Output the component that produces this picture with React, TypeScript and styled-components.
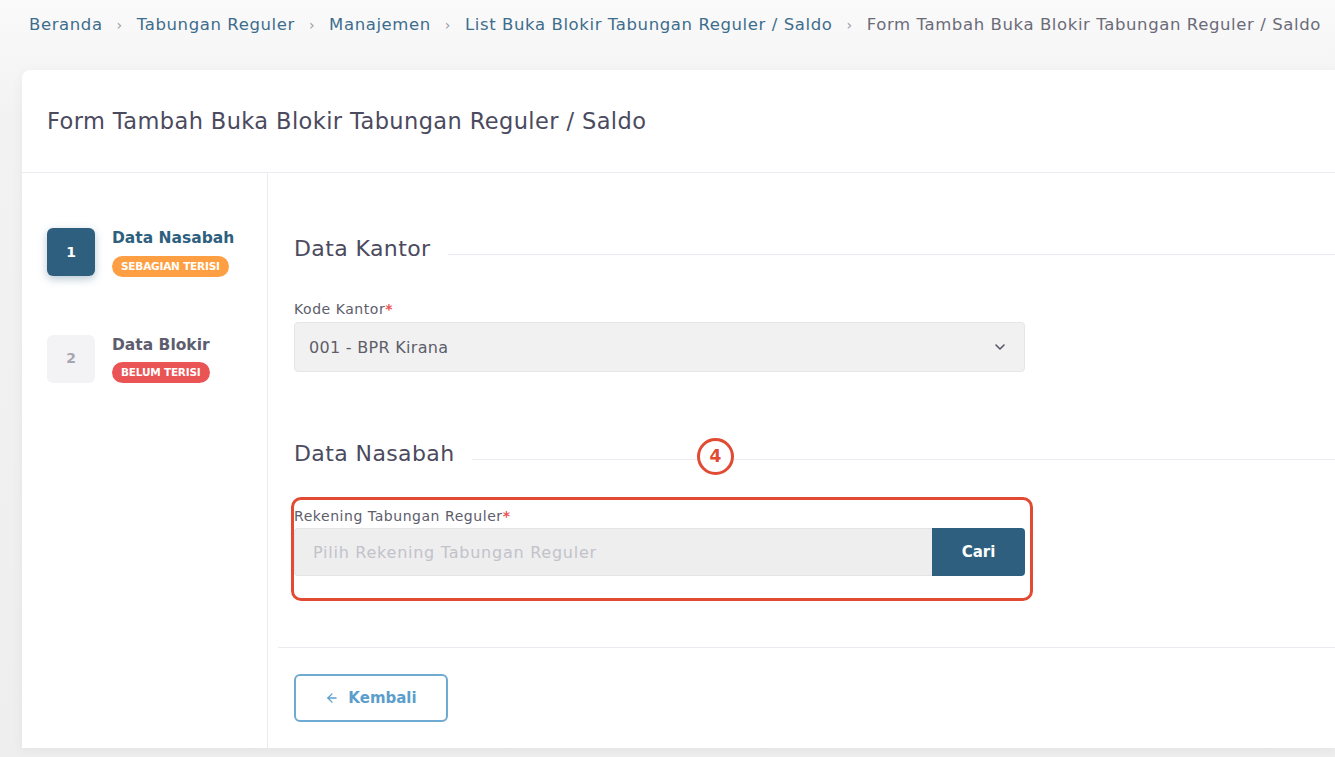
import React from 'react'
import styled, { createGlobalStyle } from 'styled-components'

const COLORS = {
  primary: '#2e5f7e',
  link: '#3d6d8d',
  text: '#4b4a5e',
  line: '#ebebf1',
  field: '#f1f1f1',
  orange: '#ff9f43',
  red: '#ea5455',
  annot: '#e24b33',
  outline: '#6eaad2',
}

const GlobalStyle = createGlobalStyle`
  html, body {
    margin: 0;
    padding: 0;
  }
  body {
    background: #f4f4f4;
    font-family: 'DejaVu Sans', 'Open Sans', sans-serif;
    line-height: 1.2;
    color: ${COLORS.text};
    overflow: hidden;
  }
`

const Page = styled.div`
  width: 1335px;
  height: 757px;
  overflow: hidden;
  background: linear-gradient(#fafafa, #f2f2f2 120px, #eeeeee);
`

const Breadcrumb = styled.nav`
  display: flex;
  align-items: center;
  gap: 14px;
  height: 50px;
  padding-left: 29px;
  font-size: 16.5px;
  letter-spacing: 0.6px;
  white-space: nowrap;
`

const Crumb = styled.span<{ $current?: boolean }>`
  color: ${(p) => (p.$current ? '#6b6b78' : COLORS.link)};
`

const Sep = styled.span`
  color: #9a9aa4;
  font-size: 14px;
`

const Card = styled.div`
  margin: 20px 0 0 22px;
  height: 678px;
  background: #fff;
  border-radius: 8px 0 0 0;
  box-shadow: 0 2px 12px rgba(0, 0, 0, 0.05);
  display: flex;
  flex-direction: column;
`

const CardHeader = styled.div`
  height: 102px;
  display: flex;
  align-items: center;
  padding-left: 25px;
  border-bottom: 1px solid ${COLORS.line};
  font-size: 22.5px;
  letter-spacing: 0.4px;
  color: ${COLORS.text};
`

const Body = styled.div`
  flex: 1;
  display: flex;
`

const Sidebar = styled.aside`
  box-sizing: border-box;
  width: 246px;
  flex-shrink: 0;
  border-right: 1px solid ${COLORS.line};
  padding: 55px 0 0 25px;
  display: flex;
  flex-direction: column;
  gap: 58px;
`

const Step = styled.div`
  display: flex;
  gap: 17px;
  align-items: flex-start;
`

const StepNum = styled.div<{ $active?: boolean }>`
  width: 48px;
  height: 48px;
  border-radius: 6px;
  display: flex;
  align-items: center;
  justify-content: center;
  font-size: 14px;
  font-weight: 600;
  background: ${(p) => (p.$active ? COLORS.primary : '#f3f3f5')};
  color: ${(p) => (p.$active ? '#fff' : '#a6a6b0')};
  box-shadow: ${(p) => (p.$active ? '0 3px 8px rgba(46, 95, 126, 0.35)' : 'none')};
`

const StepInfo = styled.div`
  display: flex;
  flex-direction: column;
  gap: 8px;
  padding-top: 1px;
`

const StepTitle = styled.div<{ $active?: boolean }>`
  font-size: 15.5px;
  font-weight: 700;
  color: ${(p) => (p.$active ? COLORS.primary : '#5d5d6e')};
`

const Badge = styled.span<{ $tone: 'orange' | 'red' }>`
  align-self: flex-start;
  background: ${(p) => (p.$tone === 'orange' ? COLORS.orange : COLORS.red)};
  color: #fff;
  font-size: 10.5px;
  font-weight: 700;
  letter-spacing: -0.2px;
  height: 21px;
  display: flex;
  align-items: center;
  padding: 0 9px;
  border-radius: 11px;
`

const Main = styled.main`
  flex: 1;
  display: flex;
  flex-direction: column;
  padding-left: 10px;
`

const Form = styled.div`
  padding: 63px 0 46px 16px;
  border-bottom: 1px solid ${COLORS.line};
`

const Section = styled.div<{ $gap: number }>`
  position: relative;
  margin-bottom: ${(p) => p.$gap}px;
`

const SectionTitle = styled.div<{ $space?: number }>`
  display: flex;
  align-items: center;
  gap: 17px;
  font-size: 22px;
  letter-spacing: 0.4px;
  color: ${COLORS.text};
  margin-bottom: ${(p) => p.$space ?? 0}px;

  &::after {
    content: '';
    flex: 1;
    height: 1px;
    margin-top: 10px;
    background: ${COLORS.line};
  }
`

const Label = styled.div`
  font-size: 14px;
  letter-spacing: 0.55px;
  color: #5d5d6b;
  margin-bottom: 4px;

  b {
    color: ${COLORS.red};
    font-weight: 600;
  }
`

const Select = styled.div`
  width: 731px;
  height: 50px;
  box-sizing: border-box;
  background: ${COLORS.field};
  border: 1px solid #e6e6ea;
  border-radius: 4px;
  display: flex;
  align-items: center;
  justify-content: space-between;
  padding: 0 16px 0 14px;
  font-size: 16px;
  letter-spacing: 0.3px;
  color: #5e5e6a;
`

const FieldRow = styled.div`
  width: 731px;
  height: 48px;
  display: flex;
`

const Input = styled.div`
  flex: 1;
  background: #eeeeee;
  border: 1px solid #e3e3e8;
  border-right: none;
  border-radius: 4px 0 0 4px;
  display: flex;
  align-items: center;
  padding-left: 18px;
  font-size: 16px;
  letter-spacing: 0.75px;
  color: #c2c2ca;
`

const SearchButton = styled.button`
  width: 93px;
  border: none;
  background: ${COLORS.primary};
  color: #fff;
  font-family: inherit;
  font-size: 15px;
  font-weight: 700;
  border-radius: 0 4px 4px 0;
`

const Highlight = styled.div`
  margin: 29px 0 0 -3px;
  width: 742px;
  height: 104px;
  box-sizing: border-box;
  border: 3px solid ${COLORS.annot};
  border-radius: 10px;
  padding-top: 8px;
`

const Marker = styled.div`
  position: absolute;
  left: 403px;
  top: -3px;
  width: 31px;
  height: 31px;
  border: 3px solid ${COLORS.annot};
  border-radius: 50%;
  background: #fff;
  color: ${COLORS.annot};
  font-weight: 700;
  font-size: 17px;
  display: flex;
  align-items: center;
  justify-content: center;
`

const Footer = styled.div`
  padding: 26px 0 0 16px;
`

const BackButton = styled.button`
  width: 154px;
  height: 48px;
  background: #fff;
  border: 2px solid ${COLORS.outline};
  border-radius: 6px;
  color: #5b9ecb;
  font-family: inherit;
  font-size: 15px;
  font-weight: 700;
  display: flex;
  align-items: center;
  justify-content: center;
  gap: 9px;
`

const Chevron = () => (
  <svg width="16" height="16" viewBox="0 0 24 24" fill="none" stroke="#55556a" strokeWidth="2.4" strokeLinecap="round" strokeLinejoin="round">
    <polyline points="6 9 12 15 18 9" />
  </svg>
)

const ArrowLeft = () => (
  <svg width="14" height="14" viewBox="0 0 24 24" fill="none" stroke="currentColor" strokeWidth="2.2" strokeLinecap="round" strokeLinejoin="round">
    <line x1="19" y1="12" x2="5" y2="12" />
    <polyline points="12 19 5 12 12 5" />
  </svg>
)

const crumbs = ['Beranda', 'Tabungan Reguler', 'Manajemen', 'List Buka Blokir Tabungan Reguler / Saldo']

export default function App() {
  return (
    <Page>
      <GlobalStyle />
      <Breadcrumb>
        {crumbs.map((c) => (
          <React.Fragment key={c}>
            <Crumb>{c}</Crumb>
            <Sep>›</Sep>
          </React.Fragment>
        ))}
        <Crumb $current>Form Tambah Buka Blokir Tabungan Reguler / Saldo</Crumb>
      </Breadcrumb>

      <Card>
        <CardHeader>Form Tambah Buka Blokir Tabungan Reguler / Saldo</CardHeader>
        <Body>
          <Sidebar>
            <Step>
              <StepNum $active>1</StepNum>
              <StepInfo>
                <StepTitle $active>Data Nasabah</StepTitle>
                <Badge $tone="orange">SEBAGIAN TERISI</Badge>
              </StepInfo>
            </Step>
            <Step>
              <StepNum>2</StepNum>
              <StepInfo>
                <StepTitle>Data Blokir</StepTitle>
                <Badge $tone="red">BELUM TERISI</Badge>
              </StepInfo>
            </Step>
          </Sidebar>

          <Main>
            <Form>
              <Section $gap={69}>
                <SectionTitle $space={39}>Data Kantor</SectionTitle>
                <Label>
                  Kode Kantor<b>*</b>
                </Label>
                <Select>
                  <span>001 - BPR Kirana</span>
                  <Chevron />
                </Select>
              </Section>

              <Section $gap={0}>
                <SectionTitle>Data Nasabah</SectionTitle>
                <Marker>4</Marker>
                <Highlight>
                  <Label>
                    Rekening Tabungan Reguler<b>*</b>
                  </Label>
                  <FieldRow>
                    <Input>Pilih Rekening Tabungan Reguler</Input>
                    <SearchButton>Cari</SearchButton>
                  </FieldRow>
                </Highlight>
              </Section>
            </Form>
            <Footer>
              <BackButton>
                <ArrowLeft />
                Kembali
              </BackButton>
            </Footer>
          </Main>
        </Body>
      </Card>
    </Page>
  )
}
